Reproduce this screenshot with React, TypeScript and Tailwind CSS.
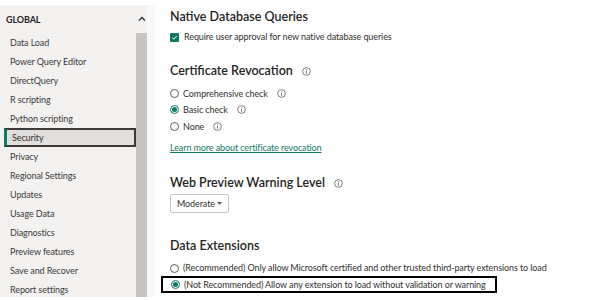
import React from "react";

const font = { fontFamily: 'Lato, "Open Sans", sans-serif' };

const navItems = [
  "Data Load",
  "Power Query Editor",
  "DirectQuery",
  "R scripting",
  "Python scripting",
  "Security",
  "Privacy",
  "Regional Settings",
  "Updates",
  "Usage Data",
  "Diagnostics",
  "Preview features",
  "Save and Recover",
  "Report settings",
];

function InfoIcon() {
  return (
    <svg width="9" height="9" viewBox="0 0 10 10" className="shrink-0">
      <circle cx="5" cy="5" r="4.3" fill="none" stroke="#605e5c" strokeWidth="0.9" />
      <circle cx="5" cy="3.1" r="0.6" fill="#605e5c" />
      <path d="M5 4.4v3" stroke="#605e5c" strokeWidth="0.9" />
    </svg>
  );
}

function Radio({ checked }: { checked?: boolean }) {
  return (
    <span
      className={
        "flex h-[9px] w-[9px] shrink-0 items-center justify-center rounded-full border " +
        (checked ? "border-[#117865]" : "border-[#605e5c]")
      }
    >
      {checked && <span className="h-[5px] w-[5px] rounded-full bg-[#117865]" />}
    </span>
  );
}

function Heading({ children, info }: { children: React.ReactNode; info?: boolean }) {
  return (
    <div className="flex h-[20px] items-center gap-[9px] whitespace-nowrap text-[12.5px] font-semibold tracking-normal text-[#252423]">
      <span>{children}</span>
      {info && <InfoIcon />}
    </div>
  );
}

export default function App() {
  return (
    <div className="flex h-[300px] w-[600px] overflow-hidden bg-white text-[#323130]" style={font}>
      {/* Sidebar */}
      <div className="mt-[5px] flex h-[292px] w-[155px] shrink-0 rounded-tr-[3px] bg-[#f3f2f1]">
        <div className="w-[136px] shrink-0 text-[9px] tracking-[-0.1px]">
          <div className="flex h-[28px] items-center pl-[6px] pt-[2px] font-bold text-[#252423]">
            GLOBAL
          </div>
          <ul>
            {navItems.map((item) =>
              item === "Security" ? (
                <li
                  key={item}
                  className="ml-[4px] flex h-[19px] items-center border-2 border-l-[3px] border-[#3b3a39] border-l-[#117865] bg-[#e1dfdd] pl-[5px]"
                >
                  {item}
                </li>
              ) : (
                <li key={item} className="flex h-[19px] items-center whitespace-nowrap pl-[10px] text-[#3b3a39]">
                  {item}
                </li>
              )
            )}
          </ul>
        </div>
        <div className="flex w-[11px] shrink-0 flex-col">
          <div className="flex h-[28px] items-center justify-center">
            <svg width="8" height="6" viewBox="0 0 8 6">
              <path d="M1 4.5L4 1.5l3 3" fill="none" stroke="#323130" strokeWidth="1.3" />
            </svg>
          </div>
          <div className="flex-1 bg-[#c8c6c4]" />
        </div>
        <div className="flex-1 bg-[#f8f8f8]" />
      </div>

      {/* Main */}
      <div className="flex-1 whitespace-nowrap pl-[15px] pt-[7px] text-[9px] tracking-[-0.1px]">
        <Heading>Native Database Queries</Heading>
        <div className="mt-[2px] flex h-[16px] items-center gap-[4px]">
          <span className="flex h-[9px] w-[9px] items-center justify-center rounded-[1px] bg-[#117865]">
            <svg width="7" height="7" viewBox="0 0 8 8">
              <path d="M1.5 4.2l1.8 1.7 3.3-3.6" fill="none" stroke="white" strokeWidth="1.1" />
            </svg>
          </span>
          <span className="ml-[1px]">Require user approval for new native database queries</span>
        </div>

        <div className="mt-[16px]">
          <Heading info>Certificate Revocation</Heading>
        </div>
        <div className="mt-[4px]">
          <div className="flex h-[16.5px] items-center gap-[4px]">
            <Radio />
            <span>Comprehensive check</span>
            <span className="ml-[5px]"><InfoIcon /></span>
          </div>
          <div className="flex h-[16.5px] items-center gap-[4px]">
            <Radio checked />
            <span>Basic check</span>
            <span className="ml-[5px]"><InfoIcon /></span>
          </div>
          <div className="flex h-[16.5px] items-center gap-[4px]">
            <Radio />
            <span>None</span>
            <span className="ml-[5px]"><InfoIcon /></span>
          </div>
        </div>
        <div className="mt-[5.5px] flex h-[16px] items-center text-[#117865] underline">
          Learn more about certificate revocation
        </div>

        <div className="mt-[17px]">
          <Heading info>Web Preview Warning Level</Heading>
        </div>
        <div className="mt-[1px] flex h-[19px] w-[59px] items-center justify-between rounded-[2px] border border-[#c8c6c4] pl-[6px] pr-[6px]">
          <span>Moderate</span>
          <svg width="5" height="3" viewBox="0 0 5 3">
            <path d="M0 0h5L2.5 3z" fill="#605e5c" />
          </svg>
        </div>

        <div className="mt-[23px]">
          <Heading>Data Extensions</Heading>
        </div>
        <div className="mt-[4px] flex h-[16px] items-center gap-[4px]">
          <Radio />
          <span>(Recommended) Only allow Microsoft certified and other trusted third-party extensions to load</span>
        </div>
        <div className="-ml-[9px] flex h-[17px] w-[336px] items-center gap-[4px] border-2 border-black pl-[8px]">
          <Radio checked />
          <span>(Not Recommended) Allow any extension to load without validation or warning</span>
        </div>
      </div>
    </div>
  );
}
